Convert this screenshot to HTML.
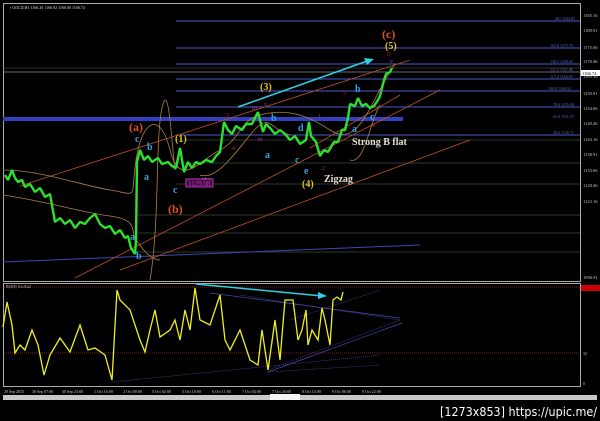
<!DOCTYPE html><html><head><style>body{margin:0;background:#000;width:600px;height:421px;overflow:hidden}svg{display:block}text{font-family:"Liberation Serif",serif}</style></head><body>
<svg width="600" height="421" viewBox="0 0 600 421" xmlns="http://www.w3.org/2000/svg">
<rect width="600" height="421" fill="#000"/>
<rect x="3.5" y="3.5" width="577" height="278" fill="none" stroke="#aaa" stroke-width="1"/>
<rect x="3.5" y="283.5" width="577" height="103" fill="none" stroke="#aaa" stroke-width="1"/>
<text x="10" y="9" fill="#ddd" font-size="4">▪ GOLD,H1 1166.26 1166.92 1166.00 1166.74</text>
<g stroke="#4a5ac8" stroke-width="1">
<line x1="176" y1="21" x2="580" y2="21"/><line x1="176" y1="48" x2="580" y2="48"/><line x1="176" y1="64" x2="580" y2="64"/><line x1="176" y1="79" x2="580" y2="79"/><line x1="176" y1="91" x2="580" y2="91"/><line x1="176" y1="107" x2="580" y2="107"/><line x1="176" y1="135" x2="580" y2="135"/>
</g>
<g stroke="#3a4a3a" stroke-width="0.7"><line x1="176" y1="140" x2="580" y2="140"/><line x1="176" y1="163" x2="580" y2="163"/><line x1="176" y1="184" x2="580" y2="184"/><line x1="136" y1="215" x2="580" y2="215"/><line x1="136" y1="233" x2="580" y2="233"/><line x1="136" y1="252" x2="580" y2="252"/></g>
<line x1="3" y1="72" x2="580" y2="72" stroke="#889" stroke-width="0.8"/>
<line x1="3" y1="68" x2="580" y2="68" stroke="#556" stroke-width="0.6"/>
<rect x="3" y="117" width="400" height="4" fill="#3040c0"/>
<line x1="3" y1="262" x2="420" y2="245" stroke="#3a4ab0"/>
<g stroke="#c05020" stroke-width="0.8" fill="none">
<line x1="20" y1="186" x2="410" y2="60"/><line x1="75" y1="278" x2="440" y2="90"/><line x1="120" y1="270" x2="470" y2="140"/><line x1="310" y1="148" x2="400" y2="95"/>
</g>
<g fill="none" stroke="#b08040" stroke-width="0.8">
<path d="M3 170 C40 170,80 185,110 190 S130 200,136 160 S160 110,170 150 S200 160,220 150 S240 120,260 115 S300 110,330 130 S370 100,395 64"/>
<path d="M3 195 C40 200,80 212,110 216 S130 232,136 240 S150 260,160 260"/>
<path d="M150 280 C160 220,155 140,162 108 S172 150,175 170"/>
<path d="M200 175 C215 180,230 160,250 135 S270 130,290 135"/>
<path d="M350 160 C365 165,370 120,380 105"/>
</g>
<polyline fill="none" stroke="#2ee02e" stroke-width="2.4" stroke-linejoin="bevel" points="5,175 8,180 12,170 15,178 18,182 22,180 25,187 30,184 35,192 40,188 45,197 50,194 52,205 55,222 60,218 65,224 70,220 75,228 80,222 85,224 90,218 95,214 100,224 105,228 110,226 115,234 120,230 125,238 128,236 131,248 135,254 136,240 137,162 140,150 144,160 148,156 152,162 158,158 162,164 168,162 172,166 176,168 180,148 184,172 188,162 192,168 196,162 200,164 206,160 212,162 216,156 220,152 224,122 228,130 232,134 236,126 242,130 246,124 252,124 255,118 258,112 263,132 266,124 270,128 275,134 280,130 285,134 290,140 295,136 300,144 306,140 309,122 311,136 316,142 320,156 324,150 328,152 334,142 338,142 342,130 345,130 348,118 350,104 355,106 358,98 362,106 366,104 370,108 374,106 378,100 380,96 384,80 386,74 390,72 392,68"/>
<line x1="238" y1="107" x2="370" y2="60" stroke="#30d0e0" stroke-width="1.6"/>
<polygon points="374,59 364,58 367,65" fill="#30d0e0"/>
<g font-size="10" font-weight="bold">
<text x="129" y="131" fill="#e05020" font-size="12">(a)</text>
<text x="168" y="213" fill="#e05020" font-size="12">(b)</text>
<text x="382" y="38" fill="#e05020" font-size="12">(c)</text>
<text x="175" y="142" fill="#e0c020">(1)</text>
<text x="200" y="185" fill="#e0c020">(2)</text>
<text x="260" y="90" fill="#e0c020">(3)</text>
<text x="302" y="187" fill="#e0c020">(4)</text>
<text x="385" y="49" fill="#e0c020">(5)</text>
<text x="135" y="142" fill="#30a0e0">c</text><text x="147" y="150" fill="#30a0e0">b</text><text x="144" y="180" fill="#30a0e0">a</text><text x="173" y="193" fill="#30a0e0">c</text>
<text x="130" y="240" fill="#30a0e0">a</text><text x="136" y="259" fill="#30a0e0">b</text>
<text x="265" y="158" fill="#30a0e0">a</text><text x="271" y="121" fill="#30a0e0">b</text><text x="295" y="163" fill="#30a0e0">c</text><text x="298" y="131" fill="#30a0e0">d</text><text x="304" y="174" fill="#30a0e0">e</text>
<text x="352" y="132" fill="#30a0e0">a</text><text x="355" y="92" fill="#30a0e0">b</text><text x="370" y="120" fill="#30a0e0">c</text>
<text x="352" y="145" fill="#e8e0d0">Strong B flat</text>
<text x="324" y="182" fill="#e8e0d0">Zigzag</text>
</g>
<rect x="186" y="179" width="27" height="8" fill="#401040" stroke="#c030c0"/>
<text x="188" y="186" font-size="7" fill="#c030c0">1129.08</text>
<g fill="#e02020" font-size="6"><text x="226" y="117">3</text><text x="232" y="150">4</text><text x="318" y="118">1</text><text x="322" y="170">2</text><text x="343" y="95">3</text><text x="372" y="127">4</text><text x="387" y="56">5</text></g>
<g fill="#c030c0" font-size="6"><text x="252" y="110">iii</text><text x="264" y="106">v</text><text x="258" y="141">iv</text><text x="378" y="92">iv</text><text x="390" y="63">v</text></g>
<g font-size="4.5" fill="#ccc">
<text x="583" y="17">1185.16</text><text x="583" y="32">1180.91</text><text x="583" y="49">1175.66</text><text x="583" y="63">1170.46</text><text x="583" y="78">1165.16</text><text x="583" y="95">1159.91</text><text x="583" y="110">1154.66</text><text x="583" y="125">1149.46</text><text x="583" y="141">1144.16</text><text x="583" y="156">1138.91</text><text x="583" y="172">1133.66</text><text x="583" y="187">1128.46</text><text x="583" y="203">1123.16</text><text x="583" y="279">1096.91</text>
</g>
<rect x="581" y="70" width="19" height="6" fill="#fff"/><text x="582" y="75" font-size="4.5" fill="#000">1166.74</text>
<g font-size="4" fill="#6070c0"><text x="555" y="20">261 1184.83</text><text x="550" y="47">161.8 1175.70</text><text x="550" y="63">138.2 1169.65</text><text x="550" y="71">127.2 1167.06</text><text x="550" y="78">117.2 1164.65</text><text x="548" y="90">100.0 1160.52</text><text x="553" y="106">78.6 1155.40</text><text x="553" y="118">61.8 1151.27</text><text x="553" y="134">38.2 1145.71</text></g>
<text x="6" y="288" font-size="4" fill="#ccc">RSI(8) 64.4622</text>
<line x1="4" y1="287" x2="580" y2="287" stroke="#702020" stroke-dasharray="1,1"/>
<line x1="4" y1="353" x2="580" y2="353" stroke="#702020" stroke-dasharray="1,1"/>
<rect x="581" y="285" width="19" height="6" fill="#c00"/>
<text x="583" y="355" font-size="4" fill="#ccc">32</text><text x="583" y="385" font-size="4" fill="#ccc">0</text>
<g stroke="#6050c0" stroke-width="0.6" fill="none" stroke-dasharray="1,1">
<line x1="112" y1="382" x2="380" y2="355"/><line x1="268" y1="372" x2="380" y2="365"/><line x1="240" y1="295" x2="400" y2="320"/><line x1="290" y1="320" x2="380" y2="290"/><line x1="268" y1="370" x2="400" y2="320"/>
</g>
<line x1="210" y1="293" x2="400" y2="318" stroke="#4050b0" stroke-width="0.7"/>
<line x1="268" y1="372" x2="402" y2="323" stroke="#4050b0" stroke-width="0.7"/>
<line x1="196" y1="284" x2="322" y2="296" stroke="#30d0e0" stroke-width="1.5"/>
<polygon points="327,296 318,292 318,299" fill="#30d0e0"/>
<polyline fill="none" stroke="#f0f020" stroke-width="1.3" points="3,327 7,302 12,325 15,353 20,345 25,350 32,330 38,345 44,375 50,355 60,338 70,352 80,325 88,350 95,348 105,355 112,380 117,290 120,300 130,310 140,340 145,352 150,330 155,310 160,337 170,330 175,320 180,340 185,310 190,330 195,288 200,320 210,325 220,295 225,340 230,350 240,330 250,360 258,365 262,330 268,370 275,320 280,360 285,300 293,300 298,340 302,330 306,310 308,345 312,330 318,340 322,308 325,320 330,345 333,300 337,297 341,300 343,292"/>
<g font-size="4" fill="#ccc"><text x="4" y="393">29 Sep 2015</text><text x="32" y="393">30 Sep 07:00</text><text x="62" y="393">30 Sep 23:00</text><text x="94" y="393">1 Oct 16:00</text><text x="123" y="393">2 Oct 09:00</text><text x="152" y="393">5 Oct 02:00</text><text x="182" y="393">5 Oct 18:00</text><text x="212" y="393">6 Oct 11:00</text><text x="242" y="393">7 Oct 04:00</text><text x="272" y="393">7 Oct 20:00</text><text x="302" y="393">8 Oct 13:00</text><text x="332" y="393">9 Oct 06:00</text><text x="362" y="393">9 Oct 22:00</text></g>
<rect x="3" y="395" width="594" height="5" fill="#c8c8c8"/>
<rect x="270" y="394" width="30" height="6" fill="#f4f4f4"/>
<text x="597" y="416" text-anchor="end" font-size="12" fill="#fff" textLength="157" lengthAdjust="spacingAndGlyphs" style="font-family:'DejaVu Sans Condensed','Liberation Sans',sans-serif">[1273x853] https://upic.me/</text>
</svg></body></html>
